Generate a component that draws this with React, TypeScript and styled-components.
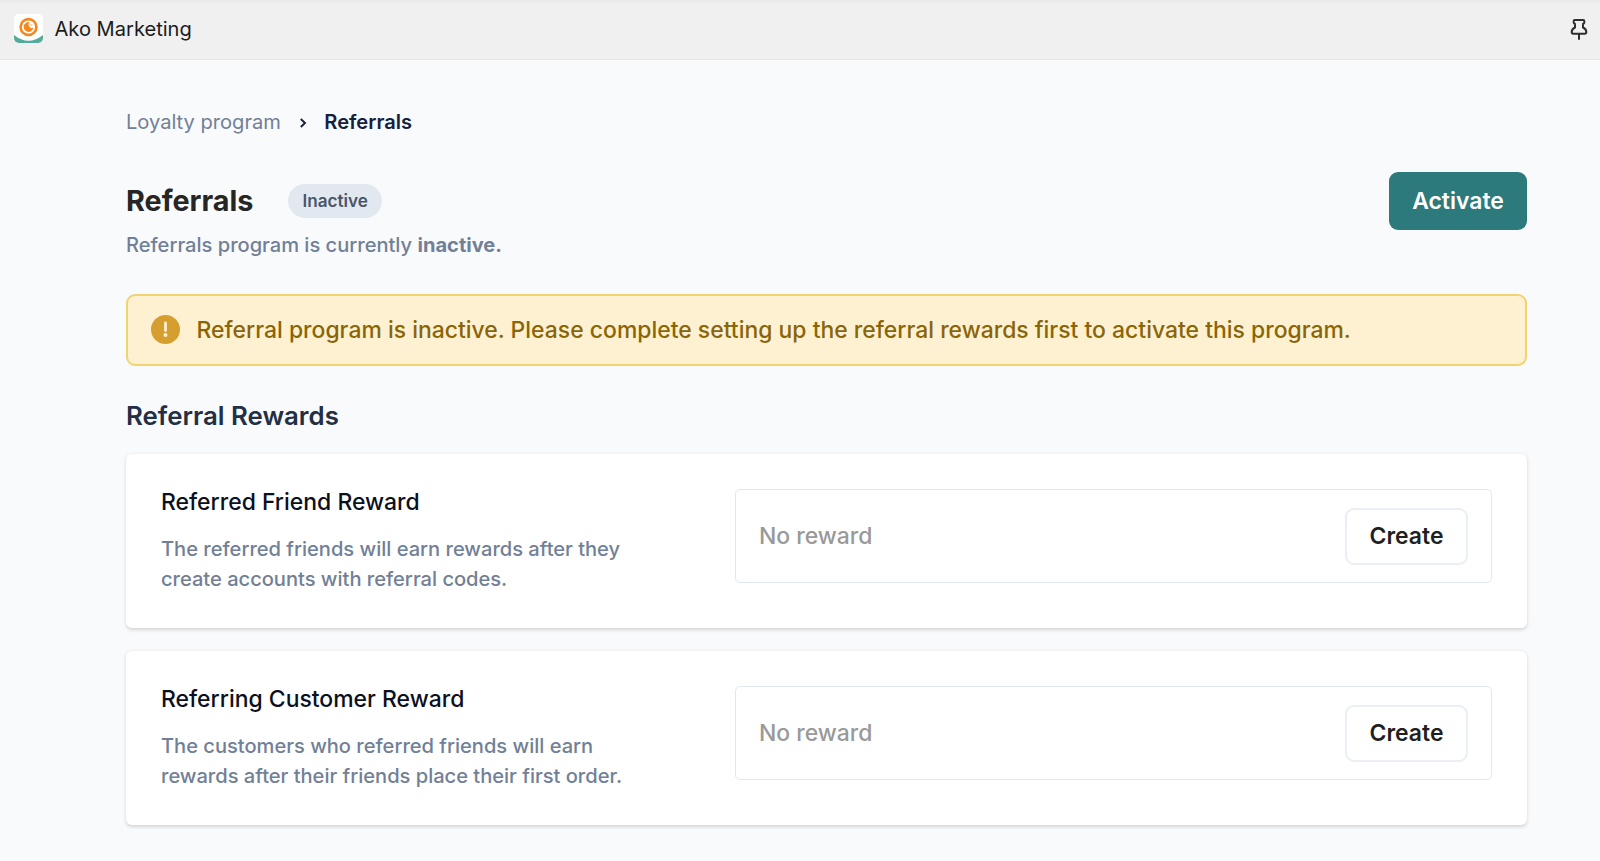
import React from "react";
import styled, { createGlobalStyle } from "styled-components";

const GlobalStyle = createGlobalStyle`
  *, *::before, *::after { box-sizing: border-box; }
  body {
    margin: 0;
    background: #f9fafc;
    font-family: Inter, "Liberation Sans", sans-serif;
    -webkit-font-smoothing: antialiased;
  }
  h1, h2, h3, p { margin: 0; }
  button { font-family: inherit; cursor: pointer; }
`;

const Page = styled.div`
  min-height: 861px;
  background: #f9fafc;
`;

const TopBar = styled.header`
  display: flex;
  align-items: center;
  height: 60px;
  padding: 0 12px 1px 14px;
  background: linear-gradient(#e9e9e9 0, #f0f0f0 4px);
  border-bottom: 1px solid #e6e8ea;
`;

const AppName = styled.span`
  flex: 1;
  margin-left: 11.5px;
  font-size: 20.08px;
  line-height: 24px;
  color: #1c1c1c;
`;

const Main = styled.main`
  padding: 50px 73px 0 126px;
`;

const Breadcrumb = styled.nav`
  display: flex;
  align-items: center;
  height: 24px;
  font-size: 20.08px;
  line-height: 24px;
  color: #718096;
`;

const Separator = styled.svg`
  margin: 2px 17.5px 0 18px;
`;

const CurrentCrumb = styled.span`
  font-weight: 600;
  color: #14213d;
`;

const PageHead = styled.div`
  display: flex;
  justify-content: space-between;
  margin-top: 38px;
`;

const TitleRow = styled.div`
  display: flex;
  align-items: center;
  height: 34px;
  margin-top: 12px;
`;

const Title = styled.h1`
  font-size: 28.75px;
  font-weight: 700;
  line-height: 34px;
  color: #262626;
`;

const Badge = styled.span`
  height: 34px;
  margin-left: 34.5px;
  padding: 0 14.5px;
  border-radius: 17px;
  background: #e2e8f0;
  font-size: 17.14px;
  font-weight: 600;
  line-height: 34px;
  color: #4a5568;
`;

const Subtitle = styled.p`
  margin-top: 15px;
  font-size: 20.09px;
  font-weight: 500;
  line-height: 24px;
  color: #718096;

  strong { font-weight: 700; }
`;

const Button = styled.button<{ $primary?: boolean }>`
  height: ${(p) => (p.$primary ? 58 : 57)}px;
  width: ${(p) => (p.$primary ? 138 : 123)}px;
  padding: ${(p) => (p.$primary ? "0" : "0 0 1px")};
  border: ${(p) => (p.$primary ? "none" : "2px solid #eaeef5")};
  border-radius: 9px;
  background: ${(p) => (p.$primary ? "#2c7a7b" : "#fff")};
  color: ${(p) => (p.$primary ? "#fff" : "#1f1f1f")};
  font-size: 22.95px;
  font-weight: 600;
  line-height: 28px;
`;

const Alert = styled.div`
  display: flex;
  align-items: center;
  height: 72px;
  margin-top: 37px;
  padding: 0 22.5px 1px;
  border: 2px solid #f0d472;
  border-radius: 9px;
  background: #fdf1d2;
`;

const AlertText = styled.p`
  margin-left: 17px;
  font-size: 22.95px;
  font-weight: 500;
  line-height: 30px;
  color: #8a6508;
`;

const SectionTitle = styled.h2`
  margin-top: 34px;
  font-size: 25.82px;
  font-weight: 600;
  line-height: 32px;
  color: #232f45;
`;

const Cards = styled.div`
  display: flex;
  flex-direction: column;
  gap: 23px;
  margin-top: 22px;
`;

const Card = styled.section`
  display: flex;
  justify-content: space-between;
  align-items: flex-start;
  height: 174px;
  padding: 35px 35px 0;
  border-radius: 6px;
  background: #fff;
  box-shadow: 0 1.5px 4px rgba(0, 0, 0, 0.1), 0 1.5px 3px rgba(0, 0, 0, 0.06);
`;

const CardText = styled.div`
  width: 480px;
`;

const CardTitle = styled.h3`
  margin-top: -1px;
  font-size: 22.95px;
  font-weight: 500;
  line-height: 28px;
  color: #0b1020;
`;

const CardDescription = styled.p`
  margin-top: 18px;
  font-size: 20.08px;
  font-weight: 500;
  line-height: 30px;
  color: #718096;
`;

const RewardSlot = styled.div`
  display: flex;
  align-items: center;
  justify-content: space-between;
  width: 757px;
  height: 94px;
  padding: 0 23px;
  border: 1px solid #e2e8f0;
  border-radius: 5px;
`;

const EmptyLabel = styled.span`
  padding-bottom: 1px;
  font-size: 22.95px;
  font-weight: 500;
  line-height: 28px;
  color: #999;
`;

const rewards = [
  {
    title: "Referred Friend Reward",
    lines: ["The referred friends will earn rewards after they", "create accounts with referral codes."],
  },
  {
    title: "Referring Customer Reward",
    lines: ["The customers who referred friends will earn", "rewards after their friends place their first order."],
  },
];

const LogoSvg = styled.svg`
  margin-bottom: 1px;
`;

const Logo = () => (
  <LogoSvg width="29" height="29" viewBox="0 0 29 29">
    <defs>
      <clipPath id="tile"><rect width="29" height="29" rx="5" /></clipPath>
    </defs>
    <g clipPath="url(#tile)">
      <rect width="29" height="29" fill="#fff" />
      <path d="M0 21 Q14.5 32.500 29 21 V29 H0Z" fill="#55ab9b" />
      <circle cx="14.500" cy="13" r="7.900" fill="none" stroke="#f5871f" strokeWidth="2.600" />
      <path d="M15.500 8.200 A4.900 4.900 0 1 0 19.400 13.800 Q17.800 14.800 16.200 13.600 Q14.200 12 14.500 10 Q14.700 8.900 15.500 8.200Z" fill="#f5871f" />
      <circle cx="17.200" cy="11" r="1.300" fill="#f5871f" opacity="0.35" />
    </g>
  </LogoSvg>
);

const Pin = () => (
  <svg width="18" height="23" viewBox="0 0 18 23" fill="none" stroke="#2e2e2e" strokeWidth="2" strokeLinejoin="round" strokeLinecap="round">
    <path d="M4.800 2H13.200Q14.300 2 14.300 3.100V4.500Q14.300 5.500 13 6V9.500Q16.300 11.200 16.300 14Q16.300 15.800 14.800 15.800H3.200Q1.700 15.800 1.700 14Q1.700 11.200 5 9.500V6Q3.700 5.500 3.700 4.500V3.100Q3.700 2 4.800 2Z" />
    <path d="M9 16V21" />
  </svg>
);

const App = () => (
  <>
    <GlobalStyle />
    <Page>
      <TopBar>
        <Logo />
        <AppName>Ako Marketing</AppName>
        <Pin />
      </TopBar>
      <Main>
        <Breadcrumb>
          <span>Loyalty program</span>
          <Separator width="8" height="12" viewBox="0 0 8 12" fill="none" stroke="#14213d" strokeWidth="1.900">
            <path d="M1.800 2L6 6L1.800 10" />
          </Separator>
          <CurrentCrumb>Referrals</CurrentCrumb>
        </Breadcrumb>
        <PageHead>
          <div>
            <TitleRow>
              <Title>Referrals</Title>
              <Badge>Inactive</Badge>
            </TitleRow>
            <Subtitle>Referrals program is currently <strong>inactive.</strong></Subtitle>
          </div>
          <Button $primary>Activate</Button>
        </PageHead>
        <Alert>
          <svg width="29" height="29" viewBox="0 0 29 29">
            <circle cx="14.500" cy="14.500" r="14.500" fill="#d69e2e" />
            <path d="M14.500 8V15.500" stroke="#fdf1d2" strokeWidth="2.800" strokeLinecap="round" />
            <circle cx="14.500" cy="20" r="2" fill="#fdf1d2" />
          </svg>
          <AlertText>
            Referral program is inactive. Please complete setting up the referral rewards first to activate this program.
          </AlertText>
        </Alert>
        <SectionTitle>Referral Rewards</SectionTitle>
        <Cards>
          {rewards.map((reward) => (
            <Card key={reward.title}>
              <CardText>
                <CardTitle>{reward.title}</CardTitle>
                <CardDescription>
                  {reward.lines[0]}
                  <br />
                  {reward.lines[1]}
                </CardDescription>
              </CardText>
              <RewardSlot>
                <EmptyLabel>No reward</EmptyLabel>
                <Button>Create</Button>
              </RewardSlot>
            </Card>
          ))}
        </Cards>
      </Main>
    </Page>
  </>
);

export default App;
